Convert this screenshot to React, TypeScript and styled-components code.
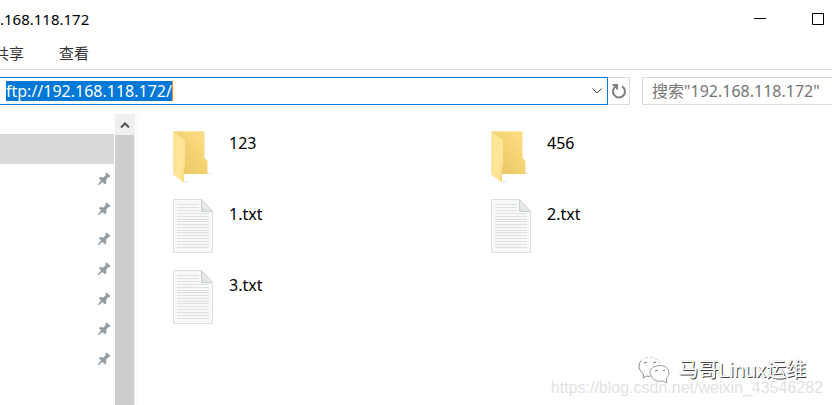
import React from "react";
import styled, { createGlobalStyle } from "styled-components";

const GlobalStyle = createGlobalStyle`
  * { box-sizing: border-box; }
  body {
    margin: 0;
    background: #fff;
    color: #000;
    font: 15px/20px "Noto Sans", "Noto Sans CJK SC", sans-serif;
    overflow: hidden;
  }
  button, input { font: inherit; color: inherit; border: 0; padding: 0; background: none; outline: 0; }
`;

const Window = styled.div`
  min-height: 100vh;
  display: flex;
  flex-direction: column;
`;

const TitleBar = styled.header`
  height: 38px;
  display: flex;
  align-items: center;
  justify-content: space-between;
`;

const Title = styled.h1`
  margin: 0;
  font-size: 15px;
  font-weight: 400;
`;

const WindowButtons = styled.div`
  display: flex;
  margin-right: -15px;
`;

const WindowButton = styled.button`
  width: 58px;
  height: 38px;
  display: grid;
  place-items: center;
`;

const Tabs = styled.nav`
  height: 32px;
  display: flex;
  align-items: center;
  gap: 35px;
  margin-left: -6px;
  padding-bottom: 2px;
  border-bottom: 1px solid #dadada;
`;

const Tab = styled.button`
  color: #333;
`;

const AddressRow = styled.div`
  display: flex;
  height: 28px;
  margin-top: 7px;
`;

const AddressBox = styled.div`
  flex: 1;
  display: flex;
  align-items: center;
  justify-content: space-between;
  border: 1px solid #0078d7;
  border-left: 0;
  padding-left: 6px;
`;

const AddressInput = styled.input`
  field-sizing: content;
  height: 20px;
  font-size: 16px;
  line-height: 20px;
  color: #fff;
  background: #0078d7;
  border-right: 1px solid #ff8728;
`;

const DropButton = styled.button`
  width: 20px;
  height: 26px;
  display: grid;
  place-items: center;
`;

const RefreshButton = styled.button`
  width: 22px;
  display: grid;
  place-items: center;
  border: 1px solid #d9d9d9;
  border-left: 0;
`;

const SearchInput = styled.input`
  flex: 0 1 190px;
  min-width: 0;
  margin-left: 12px;
  padding-left: 9px;
  font-size: 16px;
  border: 1px solid #d9d9d9;
  border-right: 0;
  &::placeholder { color: #757575; opacity: 1; }
`;

const Body = styled.div`
  flex: 1;
  display: flex;
  padding-top: 9px;
`;

const Sidebar = styled.aside`
  width: 138px;
  display: flex;
  border-right: 1px solid #f3f3f3;
`;

const QuickList = styled.ul`
  flex: 1;
  margin: 0;
  padding: 20px 1px 0 0;
  list-style: none;
`;

const QuickItem = styled.li<{ $selected?: boolean }>`
  height: 30px;
  display: flex;
  align-items: center;
  justify-content: flex-end;
  padding-right: 3px;
  background: ${(p) => (p.$selected ? "#d9d9d9" : "transparent")};
`;

const Scrollbar = styled.div`
  width: 20px;
  display: flex;
  flex-direction: column;
  margin-right: 2px;
  background: #f0f0f0;
`;

const ScrollUp = styled.button`
  height: 21px;
  display: grid;
  place-items: center;
`;

const ScrollThumb = styled.div`
  flex: 1;
  margin-right: 1px;
  background: #cdcdcd;
`;

const Main = styled.main`
  flex: 1;
  display: flex;
  flex-direction: column;
  justify-content: space-between;
`;

const FileGrid = styled.ul`
  margin: 0;
  padding: 14px 0 0 35px;
  list-style: none;
  display: grid;
  grid-template-columns: repeat(auto-fill, 318px);
  grid-auto-rows: 71px;
`;

const FileItem = styled.li`
  display: flex;
  gap: 14px;
`;

const FileName = styled.span`
  padding-top: 5px;
  font-size: 16px;
`;

const Watermark = styled.footer`
  display: flex;
  flex-direction: column;
  align-items: flex-end;
  padding: 0 9px 9px 0;
`;

const Brand = styled.div`
  display: flex;
  align-items: center;
  gap: 6px;
  margin: 0 17px -4px 0;
  font: 20px/24px "Liberation Sans", "Noto Sans CJK SC", sans-serif;
  color: #fff;
  text-shadow: 1px 1px 0 #444, 0 0 1px #bbb;
`;

const BlogUrl = styled.a`
  font: 16px/16px "Liberation Sans", sans-serif;
  color: #e2e2e2;
  text-decoration: none;
`;

const Pin = () => (
  <svg width="14" height="14" viewBox="0 0 14 14" aria-hidden="true">
    <path d="M8.5 1.2 9.7.4 13.2 3.8 12.8 5 11.2 5.3 9.2 7.8 9.4 10.4 8.3 12.4 5.4 9.9 1.5 13.3.7 12.6 4 8.5 1.8 6.1 3.3 5.1 6.2 5.5 8.7 3.2Z" fill="#929da5" />
  </svg>
);

const FolderIcon = () => (
  <svg width="42" height="58" viewBox="0 -4 42 58" aria-hidden="true">
    <defs>
      <linearGradient id="folderBack" x1="0" y1="1" x2="1" y2="0">
        <stop offset="0" stopColor="#e8c35e" />
        <stop offset="1" stopColor="#ffe086" />
      </linearGradient>
      <linearGradient id="folderFront" x1="0" y1="0" x2="1" y2="1">
        <stop offset="0" stopColor="#ffe391" />
        <stop offset=".7" stopColor="#ffe59a" />
        <stop offset="1" stopColor="#f7d36d" />
      </linearGradient>
    </defs>
    <path d="M12 51 17 50 12 48ZM34 43 39 41 34 41Z" fill="#ececec" />
    <path d="M.5-.5H31.500V26L34.500 29V42H.5Z" fill="url(#folderBack)" />
    <path d="M.5-.5 12 8.500V34.500L11 36V50.500L.5 43Z" fill="url(#folderFront)" />
    <path d="M1 0H31" stroke="#f9dd88" fill="none" />
  </svg>
);

const DocumentIcon = () => (
  <svg width="42" height="54" viewBox="0 0 42 54" aria-hidden="true">
    <defs>
      <linearGradient id="pageFold" x1="0" y1="1" x2="1" y2="0">
        <stop offset="0" stopColor="#d9dcdc" />
        <stop offset=".7" stopColor="#f4f5f5" />
      </linearGradient>
    </defs>
    <path d="M.5.500H28.500L39.500 12.500V53.500H.5Z" fill="#f7f8f9" stroke="#dcdfe0" />
    {[5, 8, 11].map((y) => (
      <path key={y} d={`M4 ${y + 0.5}H26`} stroke="#dfe1e2" />
    ))}
    {[14, 17, 20, 22, 25, 28, 31, 33, 36, 39, 42, 45, 48].map((y) => (
      <path key={y} d={`M4 ${y + 0.5}H36`} stroke="#dfe1e2" />
    ))}
    <path d="M28.500.5V12.500H39.500Z" fill="url(#pageFold)" stroke="#cdd0d1" />
  </svg>
);

const WeChatIcon = () => (
  <svg width="34" height="28" viewBox="0 0 34 28" fill="none" aria-hidden="true">
    <path d="M12 20.500 9 20 5 22 5.500 18C1 15-.5 9 3 5" stroke="#8a8a8a" />
    <path d="M3 5C8-1 19 0 22 8" stroke="#d0d0d0" strokeDasharray="3 2" />
    <path d="M28 23C34 17 30 9.500 22 9.500 14 9.500 10 15 13 20 16 25 21 26 25 25L29 27Z" fill="#fff" stroke="#999" />
    <path d="M6 7 9 6M15 7 18 6M17 15 20 14M25 15 27 14" stroke="#777" />
  </svg>
);

const files = [
  { name: "123", folder: true },
  { name: "456", folder: true },
  { name: "1.txt", folder: false },
  { name: "2.txt", folder: false },
  { name: "3.txt", folder: false },
];

export default function App() {
  return (
    <Window>
      <GlobalStyle />
      <TitleBar>
        <Title>.168.118.172</Title>
        <WindowButtons>
          <WindowButton aria-label="最小化">
            <svg width="12" height="12"><path d="M0 5.500H12" stroke="#000" /></svg>
          </WindowButton>
          <WindowButton aria-label="最大化">
            <svg width="12" height="12"><path d="M.5.500H11.500V11.500H.5Z" fill="none" stroke="#000" /></svg>
          </WindowButton>
        </WindowButtons>
      </TitleBar>
      <Tabs>
        <Tab>共享</Tab>
        <Tab>查看</Tab>
      </Tabs>
      <AddressRow>
        <AddressBox>
          <AddressInput aria-label="地址" defaultValue="ftp://192.168.118.172/" />
          <DropButton aria-label="展开">
            <svg width="10" height="6"><path d="M.5.500 5 5 9.500.5" fill="none" stroke="#444" /></svg>
          </DropButton>
        </AddressBox>
        <RefreshButton aria-label="刷新">
          <svg width="16" height="16" viewBox="0 0 16 16" fill="none" stroke="#808080" strokeWidth="2">
            <path d="M11 3.300A6 6 0 1 1 5.500 3" />
            <path d="M1.500 2H6V6.500" />
          </svg>
        </RefreshButton>
        <SearchInput aria-label="搜索" placeholder={'搜索"192.168.118.172"'} />
      </AddressRow>
      <Body>
        <Sidebar>
          <QuickList>
            <QuickItem $selected />
            {Array.from({ length: 7 }, (_, i) => (
              <QuickItem key={i}><Pin /></QuickItem>
            ))}
          </QuickList>
          <Scrollbar>
            <ScrollUp aria-label="向上滚动">
              <svg width="10" height="8"><path d="M1 6.500 5 2.500 9 6.500" fill="none" stroke="#555" strokeWidth="2" /></svg>
            </ScrollUp>
            <ScrollThumb />
          </Scrollbar>
        </Sidebar>
        <Main>
          <FileGrid>
            {files.map((f) => (
              <FileItem key={f.name}>
                {f.folder ? <FolderIcon /> : <DocumentIcon />}
                <FileName>{f.name}</FileName>
              </FileItem>
            ))}
          </FileGrid>
          <Watermark>
            <Brand><WeChatIcon />马哥Linux运维</Brand>
            <BlogUrl href="https://blog.csdn.net/weixin_43546282">https://blog.csdn.net/weixin_43546282</BlogUrl>
          </Watermark>
        </Main>
      </Body>
    </Window>
  );
}
